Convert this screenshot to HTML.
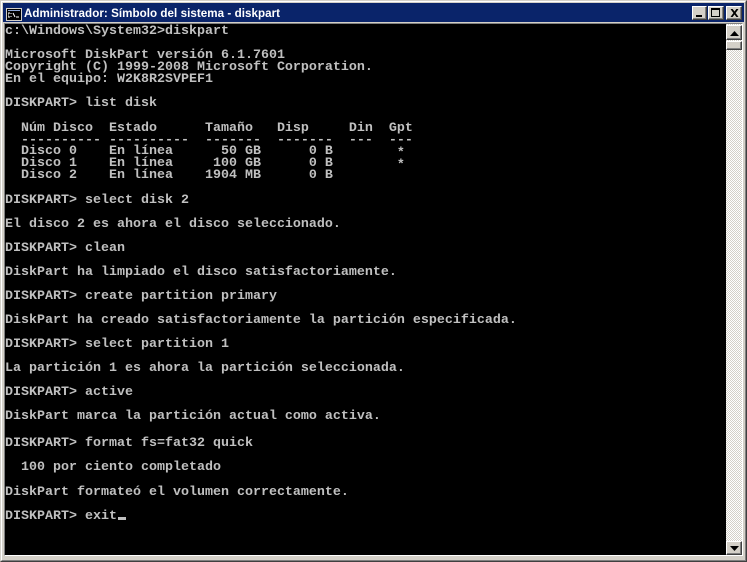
<!DOCTYPE html>
<html><head><meta charset="utf-8">
<style>
html,body{margin:0;padding:0;background:#d4d0c8}
#w{position:relative;width:747px;height:562px;overflow:hidden;background:#d4d0c8}
.a{position:absolute}
#w>.edge1{left:0;top:0;box-sizing:border-box;width:747px;height:562px;border-top:1px solid #d4d0c8;border-left:1px solid #d4d0c8;border-right:1px solid #404040;border-bottom:1px solid #404040}
#w>.edge2{left:1px;top:1px;width:745px;height:560px;box-sizing:border-box;border-top:1px solid #fff;border-left:1px solid #fff;border-right:1px solid #808080;border-bottom:1px solid #808080}
#tb{left:3px;top:3px;width:741px;height:19px;background:#0a246a}
#title{left:24px;top:6px;color:#fff;font:bold 11.6px/15px "Liberation Sans",sans-serif;white-space:pre;letter-spacing:.05px}
.btn{box-sizing:border-box;background:#d4d0c8;border-top:1px solid #fff;border-left:1px solid #fff;border-right:1px solid #404040;border-bottom:1px solid #404040;box-shadow:inset -1px -1px 0 #808080}
#sunk{left:4px;top:23px;width:739px;height:533px;box-sizing:border-box;border-top:1px solid #808080;border-left:1px solid #808080;border-right:1px solid #fff;border-bottom:1px solid #fff}
#con{left:5px;top:24px;width:721px;height:531px;background:#000}
#sb{left:726px;top:24px;width:16px;height:531px;background:conic-gradient(#fff 25%,#d4d0c8 0 50%,#fff 0 75%,#d4d0c8 0) 0 0/2px 2px}
pre{position:absolute;left:5px;margin:0;color:#c0c0c0;font:bold 13.33px/12px "Liberation Mono",monospace;height:12px;white-space:pre}
</style></head><body>
<div id="w">
<div class="a edge1"></div><div class="a edge2"></div>
<div class="a" id="tb"></div>
<div class="a" style="left:6px;top:8px;width:16px;height:13px;background:#d4d0c8"></div>
<div class="a" style="left:7px;top:9px;width:14px;height:11px;background:#000"></div>
<div class="a" style="left:8px;top:10px;width:12px;height:1px;background:#8fa8d8"></div>
<svg class="a" style="left:8px;top:12px" width="12" height="7" viewBox="0 0 12 7"><path d="M0 1h2M0 1v4M0 5h2M3 1v1M3 4v1M5 1l2 4M8 5h3" stroke="#fff" stroke-width="1" fill="none"/></svg>
<div class="a" id="title">Administrador: Símbolo del sistema - diskpart</div>
<div class="a btn" style="left:692px;top:6px;width:15px;height:14px"><div class="a" style="left:3px;top:8px;width:6px;height:2px;background:#000"></div></div>
<div class="a btn" style="left:708px;top:6px;width:16px;height:14px"><div class="a" style="left:2px;top:1px;width:9px;height:9px;box-sizing:border-box;border:1px solid #000;border-top-width:2px"></div></div>
<div class="a btn" style="left:726px;top:6px;width:16px;height:14px"><svg class="a" style="left:3px;top:2px" width="9" height="8" viewBox="0 0 9 8"><path d="M1 0l6 8M2 0l6 8M7 0L1 8M8 0L2 8" stroke="#000" stroke-width="1" fill="none"/></svg></div>
<div class="a" id="sunk"></div>
<div class="a" id="con"></div>
<div class="a" id="sb"></div>
<div class="a btn" style="left:726px;top:25px;width:16px;height:15px"><svg class="a" style="left:3px;top:5px" width="9" height="5"><path d="M4.5 0L0 5h9z" fill="#000"/></svg></div>
<div class="a btn" style="left:726px;top:41px;width:16px;height:9px"></div>
<div class="a btn" style="left:726px;top:541px;width:16px;height:14px"><svg class="a" style="left:3px;top:4px" width="9" height="5"><path d="M0 0h9L4.5 5z" fill="#000"/></svg></div>
<pre style="top:26px">c:\Windows\System32&gt;diskpart</pre>
<pre style="top:50px">Microsoft DiskPart versión 6.1.7601</pre>
<pre style="top:62px">Copyright (C) 1999-2008 Microsoft Corporation.</pre>
<pre style="top:74px">En el equipo: W2K8R2SVPEF1</pre>
<pre style="top:98px">DISKPART&gt; list disk</pre>
<pre style="top:123px">  Núm Disco  Estado      Tamaño   Disp     Din  Gpt</pre>
<pre style="top:135px">  ---------- ----------  -------  -------  ---  ---</pre>
<pre style="top:146px">  Disco 0    En línea      50 GB      0 B</pre>
<pre style="top:158px">  Disco 1    En línea     100 GB      0 B</pre>
<pre style="top:170px">  Disco 2    En línea    1904 MB      0 B</pre>
<pre style="top:148px">                                                 *</pre>
<pre style="top:160px">                                                 *</pre>
<pre style="top:195px">DISKPART&gt; select disk 2</pre>
<pre style="top:219px">El disco 2 es ahora el disco seleccionado.</pre>
<pre style="top:243px">DISKPART&gt; clean</pre>
<pre style="top:267px">DiskPart ha limpiado el disco satisfactoriamente.</pre>
<pre style="top:291px">DISKPART&gt; create partition primary</pre>
<pre style="top:315px">DiskPart ha creado satisfactoriamente la partición especificada.</pre>
<pre style="top:339px">DISKPART&gt; select partition 1</pre>
<pre style="top:363px">La partición 1 es ahora la partición seleccionada.</pre>
<pre style="top:387px">DISKPART&gt; active</pre>
<pre style="top:411px">DiskPart marca la partición actual como activa.</pre>
<pre style="top:438px">DISKPART&gt; format fs=fat32 quick</pre>
<pre style="top:462px">  100 por ciento completado</pre>
<pre style="top:487px">DiskPart formateó el volumen correctamente.</pre>
<pre style="top:511px">DISKPART&gt; exit</pre>
<div class="a" style="left:118px;top:517px;width:8px;height:3px;background:#c0c0c0"></div>
</div>
</body></html>
